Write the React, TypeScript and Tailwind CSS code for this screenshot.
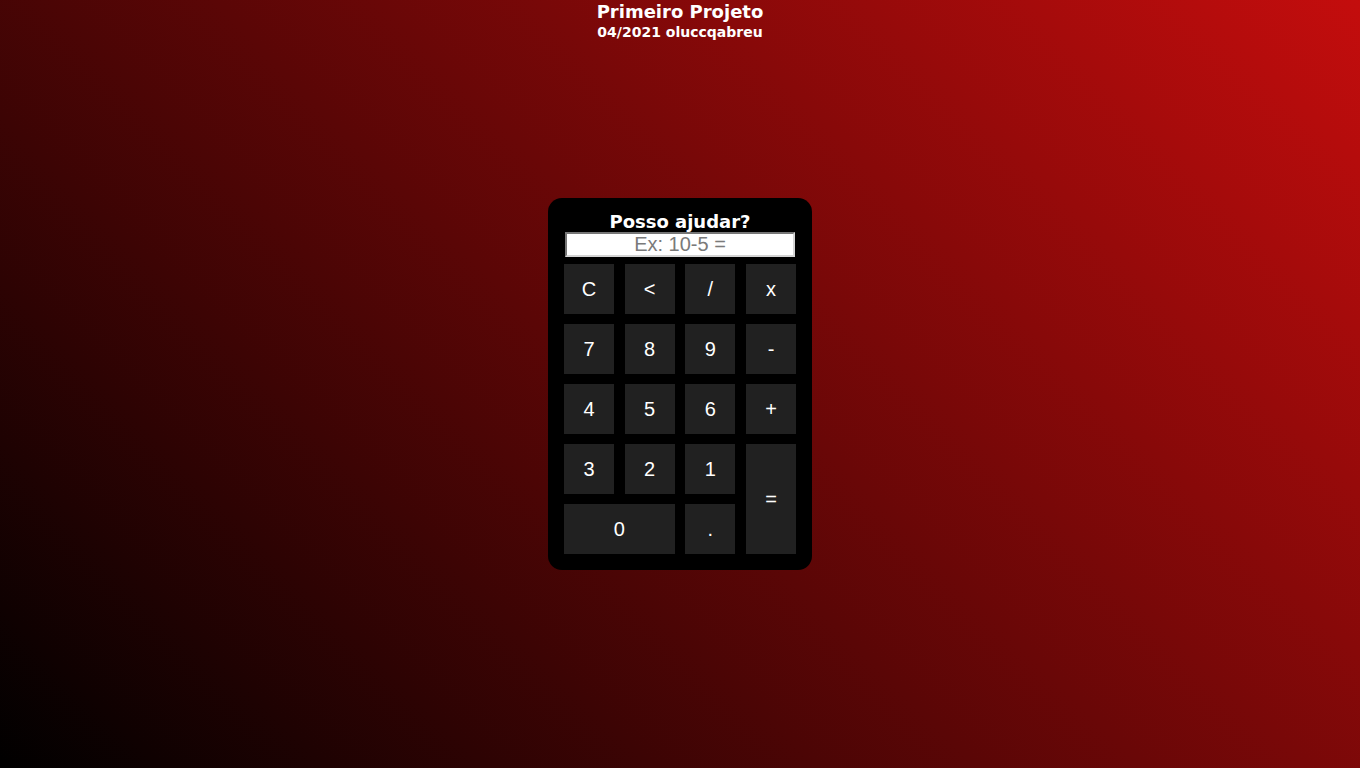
const keys: { label: string; span?: string }[] = [
  { label: 'C' },
  { label: '<' },
  { label: '/' },
  { label: 'x' },
  { label: '7' },
  { label: '8' },
  { label: '9' },
  { label: '-' },
  { label: '4' },
  { label: '5' },
  { label: '6' },
  { label: '+' },
  { label: '3' },
  { label: '2' },
  { label: '1' },
  { label: '=', span: 'row-span-2' },
  { label: '0', span: 'col-span-2' },
  { label: '.' },
];

export default function App() {
  return (
    <div className="h-screen flex flex-col bg-[linear-gradient(45deg,#000000,#c40d0d)] text-white">
      {/* Header */}
      <header className="h-12 pt-[2px] text-center font-['DejaVu_Sans',sans-serif] font-bold">
        <h1 className="text-[18px] leading-[19px]">Primeiro Projeto</h1>
        <p className="text-[14px] leading-[14px] mt-[4px]">04/2021 oluccqabreu</p>
      </header>

      {/* Calculator */}
      <main className="flex-1 pb-12 flex items-center justify-center">
        <div className="w-[264px] h-[372px] bg-black rounded-[14px] px-4 pt-[13px] pb-4 flex flex-col">
          <h2 className="text-center text-[18px] font-bold leading-[21px] font-['DejaVu_Sans',sans-serif]">
            Posso ajudar?
          </h2>
          <input
            type="text"
            placeholder="Ex: 10-5 ="
            className="block mx-auto w-[230px] h-[25px] bg-white text-black text-center text-[20px] leading-none font-['Liberation_Sans',Arial,sans-serif] placeholder:text-[#7a7a7a] border-2 border-t-[#767676] border-l-[#767676] border-b-[#d4d4d4] border-r-[#d4d4d4] outline-none"
          />
          <div className="mt-[7px] grid grid-cols-[repeat(4,50px)] grid-rows-[repeat(5,50px)] gap-x-[10.67px] gap-y-[10px]">
            {keys.map((k) => (
              <button
                key={k.label}
                className={`${k.span ?? ''} bg-[#212121] text-white text-[20px] font-['Liberation_Sans',Arial,sans-serif] flex items-center justify-center`}
              >
                {k.label}
              </button>
            ))}
          </div>
        </div>
      </main>
    </div>
  );
}
